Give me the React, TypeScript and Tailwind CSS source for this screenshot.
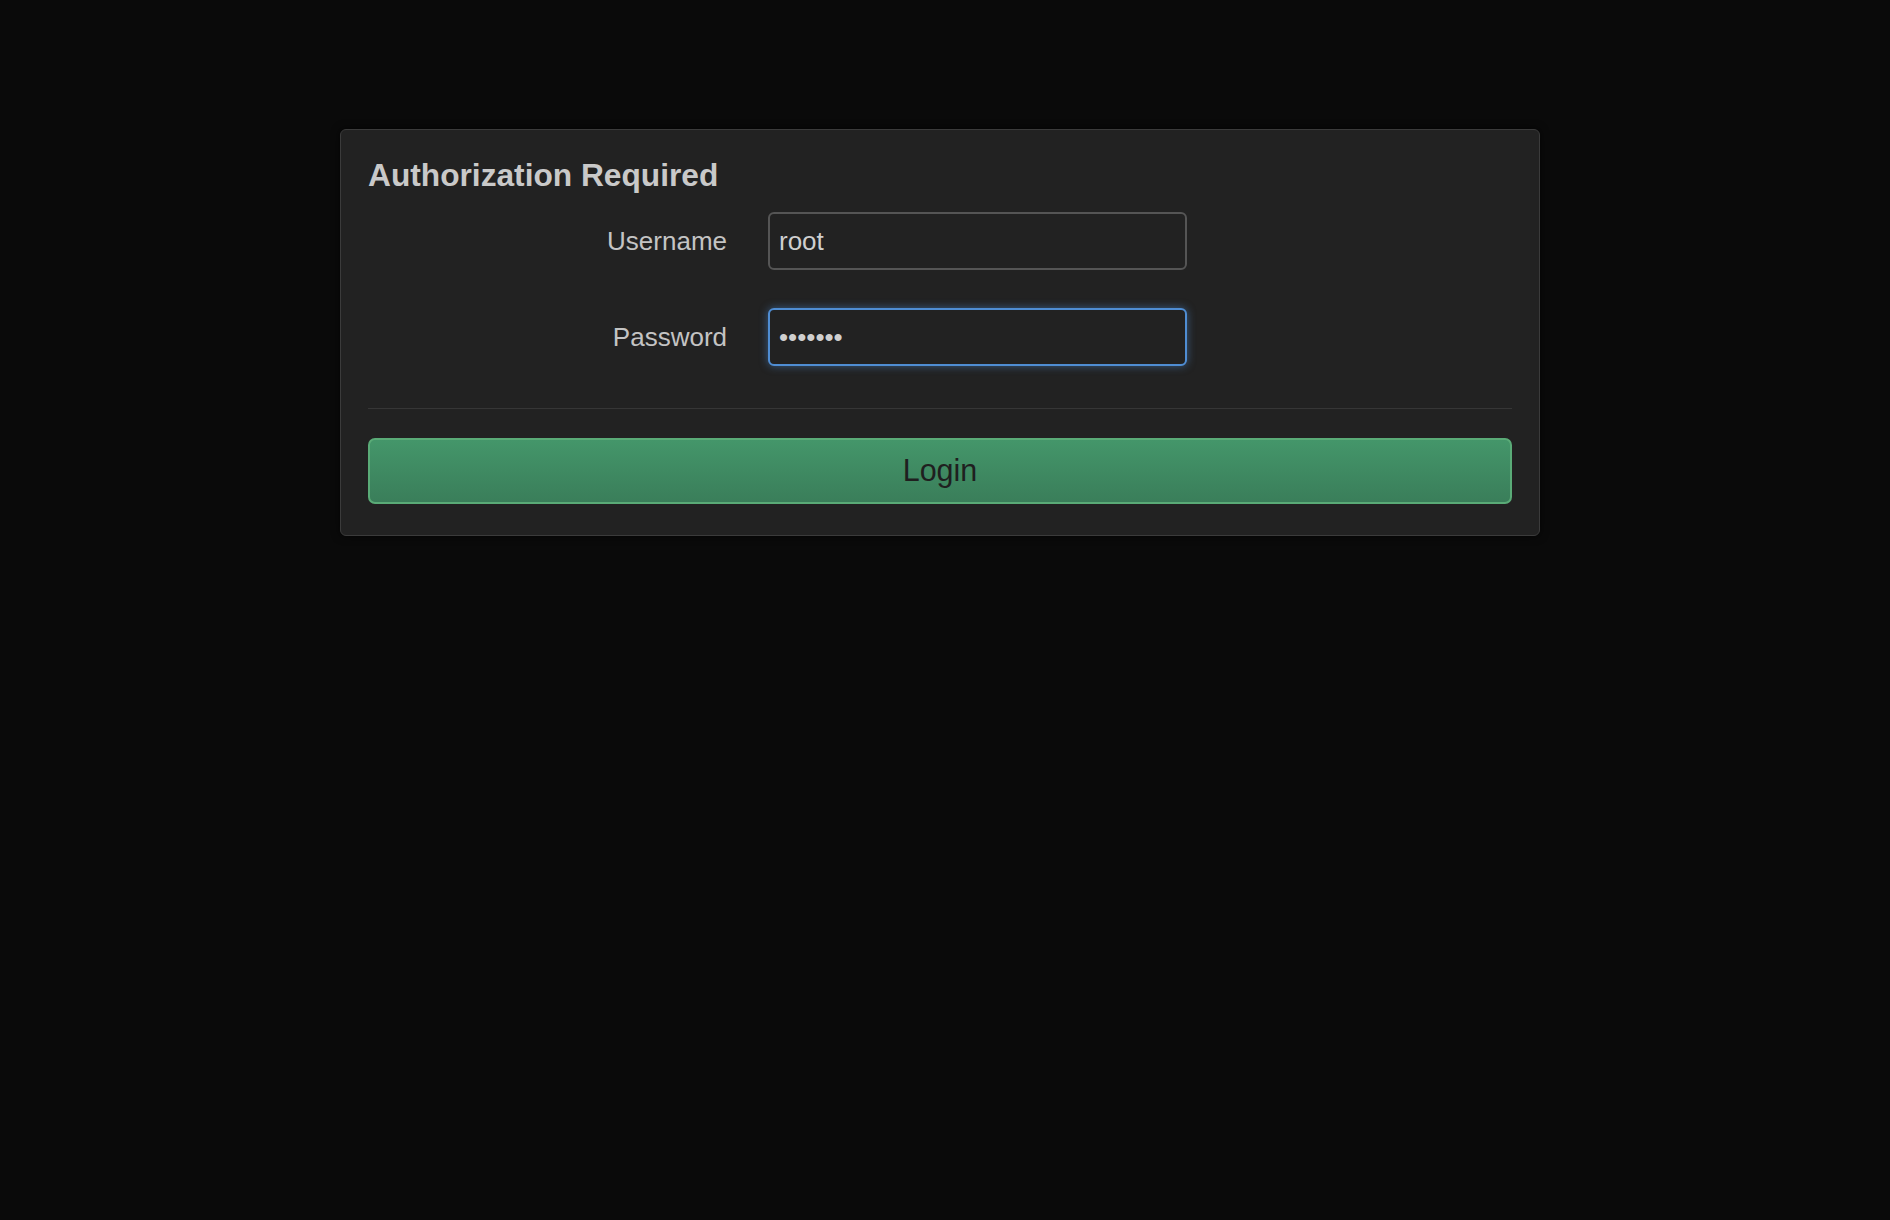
export default function App() {
  return (
    <div
      className="min-h-screen bg-[#0a0a0a] pt-[129px] pl-[340px]"
      style={{ fontFamily: '"Liberation Sans", Arial, Helvetica, sans-serif' }}
    >
      <div className="w-[1200px] rounded-[6px] border border-[#3b3b3b] bg-[#222222] px-[27px] pt-[26px] pb-[31px] shadow-[0_0_8px_rgba(0,0,0,0.7)]">
        {/* Title */}
        <h2 className="text-[31.7px] font-bold leading-[38px] text-[#c9c9c9]">
          Authorization Required
        </h2>

        {/* Username */}
        <div className="mt-[18px] flex items-center">
          <label className="w-[359px] text-right text-[26px] text-[#c4c4c4]">Username</label>
          <input
            readOnly
            defaultValue="root"
            className="ml-[41px] h-[58px] w-[419px] rounded-[6px] border-2 border-[#555555] bg-[#222222] px-[9px] text-[26px] text-[#cfcfcf] outline-none"
          />
        </div>

        {/* Password */}
        <div className="mt-[38px] flex items-center">
          <label className="w-[359px] text-right text-[26px] text-[#c4c4c4]">Password</label>
          <input
            readOnly
            type="password"
            defaultValue="1234567"
            className="ml-[41px] h-[58px] w-[419px] rounded-[6px] border-2 border-[#4f8dd3] bg-[#222222] px-[9px] text-[26px] text-[#cfcfcf] shadow-[0_0_8px_rgba(79,141,211,0.55)] outline-none"
          />
        </div>

        <div className="mt-[42px] h-px bg-[#363636]" />

        <button className="mt-[29px] h-[66px] w-full rounded-[7px] border-2 border-[#5aab77] bg-gradient-to-b from-[#44966a] to-[#3a7e5a] text-[30.5px] text-[#1f1f1f]">
          Login
        </button>
      </div>
    </div>
  );
}
